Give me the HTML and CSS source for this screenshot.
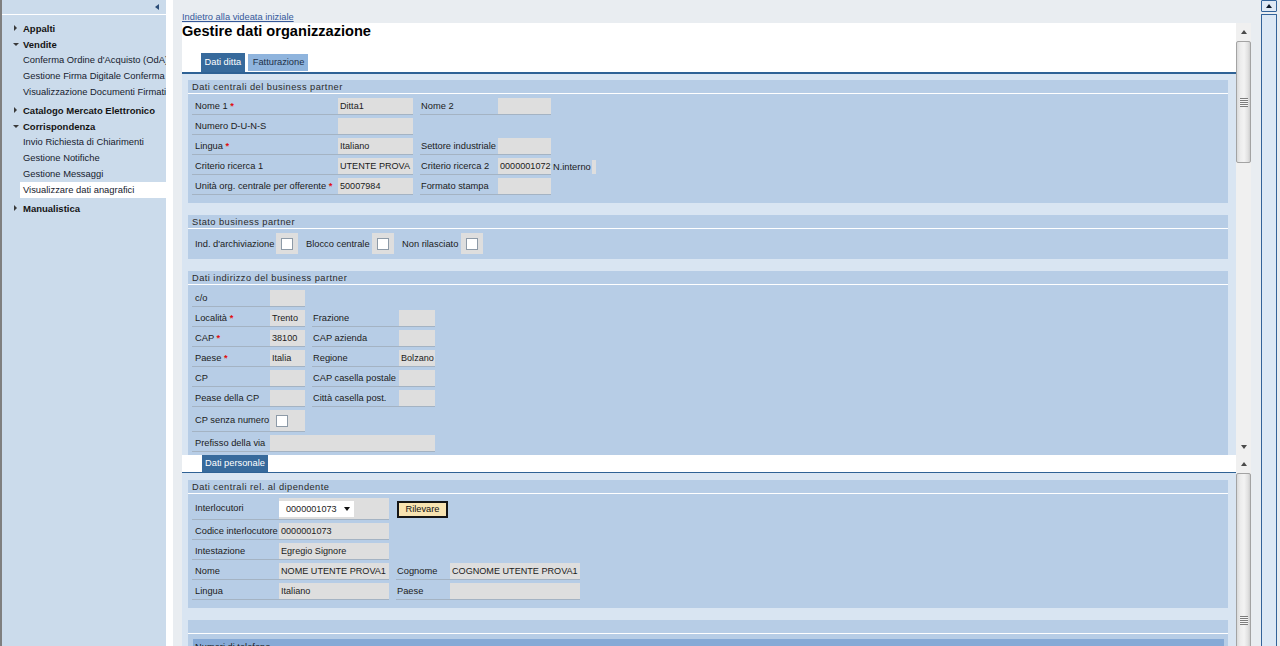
FILE: index.html
```html
<!DOCTYPE html>
<html lang="it">
<head>
<meta charset="utf-8">
<title>Gestire dati organizzazione</title>
<link rel="stylesheet" href="styles.css">
</head>
<body>
<div class="page">
  <aside class="nav">
    <div class="nav-top"><span class="collapse"></span></div>
    <ul class="nav-list">
      <li class="grp"><div class="grp-title"><span class="tri"><i class="r"></i></span>Appalti</div></li>
      <li class="grp open">
        <div class="grp-title"><span class="tri"><i class="d"></i></span>Vendite</div>
        <ul class="sub">
          <li>Conferma Ordine d'Acquisto (OdA)</li>
          <li>Gestione Firma Digitale Conferma</li>
          <li>Visualizzazione Documenti Firmati</li>
        </ul>
      </li>
      <li class="grp"><div class="grp-title"><span class="tri"><i class="r"></i></span>Catalogo Mercato Elettronico</div></li>
      <li class="grp open">
        <div class="grp-title"><span class="tri"><i class="d"></i></span>Corrispondenza</div>
        <ul class="sub">
          <li>Invio Richiesta di Chiarimenti</li>
          <li>Gestione Notifiche</li>
          <li>Gestione Messaggi</li>
          <li class="sel">Visualizzare dati anagrafici</li>
        </ul>
      </li>
      <li class="grp"><div class="grp-title"><span class="tri"><i class="r"></i></span>Manualistica</div></li>
    </ul>
  </aside>
  <div class="stripe"></div>
  <main class="main">
    <a class="back" href="#">Indietro alla videata iniziale</a>

    <div class="frame frame-top">
      <div class="fcontent">
        <div class="fhead">
          <h1 class="title">Gestire dati organizzazione</h1>
          <div class="tabs">
            <span class="tab active">Dati ditta</span>
            <span class="tab inactive">Fatturazione</span>
          </div>
        </div>
        <div class="area">
          <section class="sec">
            <div class="sec-h">Dati centrali del business partner</div>
            <div class="sec-b b1">
              <table class="form t1">
                <colgroup><col class="w146"><col class="w75"><col class="w7"><col class="w78"><col class="w53"><col class="w41"><col class="w4"></colgroup>
                <tr><td class="l">Nome 1 <b class="req">*</b></td><td class="f">Ditta1</td><td></td><td class="l l2">Nome 2</td><td class="f"></td><td></td><td></td></tr>
                <tr><td class="l">Numero D-U-N-S</td><td class="f"></td><td></td><td></td><td></td><td></td><td></td></tr>
                <tr><td class="l">Lingua <b class="req">*</b></td><td class="f">Italiano</td><td></td><td class="l l2">Settore industriale</td><td class="f"></td><td></td><td></td></tr>
                <tr><td class="l">Criterio ricerca 1</td><td class="f">UTENTE PROVA</td><td></td><td class="l l2">Criterio ricerca 2</td><td class="f">0000001072</td><td class="n">N.interno</td><td class="tiny"><div class="tinybox"></div></td></tr>
                <tr><td class="l">Unità org. centrale per offerente <b class="req">*</b></td><td class="f">50007984</td><td></td><td class="l l2">Formato stampa</td><td class="f"></td><td></td><td></td></tr>
              </table>
            </div>
          </section>

          <section class="sec">
            <div class="sec-h">Stato business partner</div>
            <div class="sec-b chkrow">
              <span class="cl cl1">Ind. d'archiviazione</span><span class="cbox"><i></i></span>
              <span class="cl cl2">Blocco centrale</span><span class="cbox"><i></i></span>
              <span class="cl cl3">Non rilasciato</span><span class="cbox"><i></i></span>
            </div>
          </section>

          <section class="sec">
            <div class="sec-h">Dati indirizzo del business partner</div>
            <div class="sec-b b3">
              <table class="form t3">
                <colgroup><col class="w78"><col class="w35"><col class="w7"><col class="w87"><col class="w36"></colgroup>
                <tr><td class="l">c/o</td><td class="f"></td><td></td><td></td><td></td></tr>
                <tr><td class="l">Località <b class="req">*</b></td><td class="f">Trento</td><td></td><td class="l l2">Frazione</td><td class="f"></td></tr>
                <tr><td class="l">CAP <b class="req">*</b></td><td class="f">38100</td><td></td><td class="l l2">CAP azienda</td><td class="f"></td></tr>
                <tr><td class="l">Paese <b class="req">*</b></td><td class="f">Italia</td><td></td><td class="l l2">Regione</td><td class="f">Bolzano</td></tr>
                <tr><td class="l">CP</td><td class="f"></td><td></td><td class="l l2">CAP casella postale</td><td class="f"></td></tr>
                <tr><td class="l">Pease della CP</td><td class="f"></td><td></td><td class="l l2">Città casella post.</td><td class="f"></td></tr>
                <tr class="tall"><td class="l">CP senza numero</td><td class="f"><div class="cbwrap"><i class="cb"></i></div></td><td></td><td></td><td></td></tr>
                <tr><td class="l">Prefisso della via</td><td class="f" colspan="4"></td></tr>
              </table>
            </div>
          </section>
        </div>
      </div>
      <div class="vscroll">
        <div class="sbtn"><i class="au"></i></div>
        <div class="thumb t-top"><span class="grip"></span></div>
        <div class="sfill"></div>
        <div class="sbtn"><i class="ad"></i></div>
      </div>
    </div>

    <div class="frame frame-bottom">
      <div class="fcontent">
        <div class="fhead">
          <div class="tabs tabs2">
            <span class="tab active">Dati personale</span>
          </div>
        </div>
        <div class="area area2">
          <section class="sec">
            <div class="sec-h">Dati centrali rel. al dipendente</div>
            <div class="sec-b b4">
              <table class="form t4">
                <colgroup><col class="w87"><col class="w110"><col class="w7"><col class="w54"><col class="w130"></colgroup>
                <tr class="tall"><td class="l">Interlocutori</td><td class="f fs"><div class="select"><span>0000001073</span><i class="ad blk"></i></div></td><td></td><td class="btncell" colspan="2"><span class="btn">Rilevare</span></td></tr>
                <tr><td class="l">Codice interlocutore</td><td class="f">0000001073</td><td></td><td></td><td></td></tr>
                <tr><td class="l">Intestazione</td><td class="f">Egregio Signore</td><td></td><td></td><td></td></tr>
                <tr><td class="l">Nome</td><td class="f">NOME UTENTE PROVA1</td><td></td><td class="l l2">Cognome</td><td class="f">COGNOME UTENTE PROVA1</td></tr>
                <tr><td class="l">Lingua</td><td class="f">Italiano</td><td></td><td class="l l2">Paese</td><td class="f"></td></tr>
              </table>
            </div>
          </section>
          <section class="sec">
            <div class="sec-h"></div>
            <div class="sec-b b5">
              <div class="subhead">Numeri di telefono</div>
            </div>
          </section>
        </div>
      </div>
      <div class="vscroll">
        <div class="sbtn"><i class="au"></i></div>
        <div class="thumb t-bot"><span class="grip"></span></div>
      </div>
    </div>
  </main>
  <div class="oscroll">
    <div class="obtn"><i class="au blk"></i></div>
    <div class="otrack"></div>
  </div>
</div>
</body>
</html>
```

FILE: styles.css
```css
html, body {
  margin: 0;
  padding: 0;
}
body {
  font-family: "Liberation Sans", Arial, sans-serif;
  font-size: 9.3px;
  color: #1b1b1b;
  background: #e9edf1;
  overflow: hidden;
}
.page {
  display: flex;
  height: 646px;
  overflow: hidden;
}

/* ---------- navigation ---------- */
.nav {
  flex: none;
  width: 164px;
  border-left: 2px solid #7f7f7f;
  background: #cbdbeb;
  overflow: hidden;
  font-size: 9.4px;
}
.nav-top {
  height: 14px;
  border-bottom: 1px solid #fff;
  display: flex;
  justify-content: flex-end;
  align-items: center;
  padding-right: 7px;
}
.collapse {
  width: 0;
  height: 0;
  border-top: 3px solid transparent;
  border-bottom: 3px solid transparent;
  border-right: 4px solid #2b4d78;
}
.nav-list, .sub {
  list-style: none;
  margin: 0;
  padding: 0;
}
.nav-list {
  padding-top: 5px;
}
.grp-title {
  display: flex;
  align-items: center;
  height: 16px;
  padding-left: 8px;
  font-weight: bold;
  font-size: 9.5px;
  color: #141414;
  white-space: nowrap;
}
.tri {
  width: 11px;
  height: 16px;
  margin-right: 2px;
  display: flex;
  align-items: center;
  justify-content: center;
}
.tri .r {
  width: 0;
  height: 0;
  border-top: 3px solid transparent;
  border-bottom: 3px solid transparent;
  border-left: 3px solid #3a3a3a;
}
.tri .d {
  width: 0;
  height: 0;
  border-left: 3px solid transparent;
  border-right: 3px solid transparent;
  border-top: 3px solid #3a3a3a;
}
.sub {
  margin-bottom: 2px;
}
.sub li {
  height: 16px;
  line-height: 16px;
  margin-left: 18px;
  padding-left: 3px;
  white-space: nowrap;
  overflow: hidden;
  color: #16212e;
}
.sub li.sel {
  background: #fff;
}

.stripe {
  flex: none;
  width: 7px;
  background: #fff;
}

/* ---------- main ---------- */
.main {
  flex: none;
  width: 1078px;
  padding-left: 9px;
  box-sizing: border-box;
  display: flex;
  flex-direction: column;
}
.back {
  display: block;
  padding-top: 11px;
  height: 12px;
  line-height: 12px;
  color: #35599b;
  text-decoration: underline;
  white-space: nowrap;
  align-self: flex-start;
}
.frame {
  display: flex;
  width: 1069px;
  flex: none;
  overflow: hidden;
}
.frame-top {
  height: 432px;
}
.frame-bottom {
  height: 191px;
}
.fcontent {
  flex: 1;
  overflow: hidden;
  background: #d9e5f2;
}
.fhead {
  background: #fff;
}
.title {
  margin: 0;
  font-size: 14.6px;
  line-height: 17px;
  font-weight: bold;
  color: #000;
}
.tabs {
  display: flex;
  align-items: flex-end;
  gap: 3px;
  margin-top: 13px;
  padding-left: 19px;
  border-bottom: 2px solid #2f6295;
}
.tab {
  padding: 0 3.5px;
  white-space: nowrap;
}
.tab.active {
  height: 19px;
  line-height: 19px;
  background: #376a9c;
  color: #fff;
}
.tab.inactive {
  height: 17px;
  line-height: 17px;
  margin-bottom: 1px;
  background: #8fb4dd;
  color: #1d3049;
  padding: 0 4px 0 5px;
}
.tabs2 {
  margin-top: 0;
  padding-left: 20px;
  border-bottom-width: 1px;
}
.tabs2 .tab.active {
  height: 17px;
  line-height: 17px;
  padding: 0 3px;
}

.area {
  padding: 6px 8px 0 6px;
}
.area2 {
  padding-top: 7px;
}
.sec {
  background: #b7cde6;
  margin-bottom: 12px;
}
.sec-h {
  height: 13px;
  line-height: 14px;
  padding-left: 4px;
  border-bottom: 1px solid #fff;
  letter-spacing: 0.45px;
  color: #2a2a2a;
  white-space: nowrap;
}
.sec-b {
  padding: 0 0 6px 4px;
}
.b1 {
  padding-top: 1px;
  padding-bottom: 5px;
}
.b3 {
  padding-top: 2px;
  padding-bottom: 40px;
}
.b4 {
  padding-top: 1px;
  padding-bottom: 5px;
}
.b5 {
  padding: 5px 4px 20px 5px;
}

/* ---------- form tables ---------- */
.form {
  border-collapse: separate;
  border-spacing: 0 3px;
  table-layout: fixed;
}
.t1 { width: 404px; }
.t3 { width: 243px; }
.t4 { width: 388px; }
.w146 { width: 146px; }
.w75 { width: 75px; }
.w7 { width: 7px; }
.w78 { width: 78px; }
.w53 { width: 53px; }
.w41 { width: 41px; }
.w4 { width: 4px; }
.w35 { width: 35px; }
.w87 { width: 87px; }
.w36 { width: 36px; }
.w110 { width: 110px; }
.w54 { width: 54px; }
.w130 { width: 130px; }

.form td {
  padding: 0 0 0 3px;
  line-height: 16px;
  white-space: nowrap;
  overflow: visible;
  vertical-align: middle;
}
.form td.l {
  border-bottom: 1px solid #a4b3c3;
}
.form td.l2 {
  padding-left: 1px;
}
.form td.f {
  background: #dedede;
  border-bottom: 1px solid #a4b3c3;
  overflow: hidden;
  padding-left: 2px;
  font-size: 9.1px;
}
.form td.fs {
  padding-left: 0;
}
.form td.n {
  padding-left: 2px;
}
.form td.tiny {
  padding: 0;
}
.tinybox {
  width: 4px;
  height: 14px;
  background: #dedede;
}
.req {
  color: #e01010;
  font-weight: bold;
}
.form tr.tall td {
  line-height: 21px;
}
.cbwrap {
  height: 21px;
  display: flex;
  align-items: center;
  padding-left: 4px;
}
.cb {
  display: block;
  width: 10px;
  height: 10px;
  background: #fff;
  border: 1px solid #8d9aa7;
}

/* checkbox row */
.chkrow {
  display: flex;
  align-items: center;
  padding-top: 4px;
  padding-bottom: 5px;
}
.cl {
  white-space: nowrap;
  box-sizing: border-box;
}
.cl1 { width: 84px; padding-left: 3px; }
.cl2 { width: 74px; padding-left: 8px; }
.cl3 { width: 67px; padding-left: 8px; }
.cbox {
  width: 22px;
  height: 21px;
  background: #dedede;
  display: flex;
  align-items: center;
  justify-content: center;
}
.cbox i {
  display: block;
  width: 10px;
  height: 10px;
  background: #fff;
  border: 1px solid #8d9aa7;
}

/* select + button */
.select {
  display: flex;
  align-items: center;
  justify-content: space-between;
  width: 75px;
  height: 16px;
  padding: 0 4px 0 7px;
  box-sizing: border-box;
  background: #fff;
  line-height: 16px;
}
.form td.btncell {
  padding-left: 1px;
  overflow: visible;
}
.btn {
  display: inline-block;
  width: 51px;
  height: 17px;
  box-sizing: border-box;
  border: 2px solid #151515;
  background: #f8e3b1;
  text-align: center;
  line-height: 13px;
  vertical-align: middle;
  color: #111;
}

.subhead {
  height: 14px;
  line-height: 16px;
  padding-left: 2px;
  background: #86aad6;
  color: #1b1b1b;
}

/* ---------- arrows ---------- */
.au, .ad {
  display: block;
  width: 0;
  height: 0;
  border-left: 3.5px solid transparent;
  border-right: 3.5px solid transparent;
}
.au { border-bottom: 4px solid #4a4a4a; }
.ad { border-top: 4px solid #4a4a4a; }
.au.blk { border-bottom-color: #0e1a2a; }
.ad.blk { border-top-color: #111; }

/* ---------- frame scrollbars ---------- */
.vscroll {
  flex: none;
  width: 15px;
  background: #f0f0f0;
  display: flex;
  flex-direction: column;
  overflow: hidden;
}
.sbtn {
  flex: none;
  height: 17px;
  display: flex;
  align-items: center;
  justify-content: center;
  background: #f0f0f0;
}
.thumb {
  flex: none;
  box-sizing: border-box;
  margin: 1px 0 0 0;
  border: 1px solid #a3a3a3;
  border-radius: 2px;
  background: linear-gradient(to right, #dadada 0%, #ececec 25%, #f3f3f3 55%, #e0e0e0 85%, #cdcdcd 100%);
  display: flex;
  align-items: center;
  justify-content: center;
}
.t-top { height: 122px; }
.t-bot {
  height: 294px;
  margin-top: 1px;
}
.grip {
  display: block;
  width: 8px;
  height: 9px;
  background: repeating-linear-gradient(to bottom, #7d7d7d 0, #7d7d7d 1px, #f6f6f6 1px, #f6f6f6 2px);
}
.sfill {
  flex: 1;
}

/* ---------- outer scrollbar ---------- */
.oscroll {
  flex: none;
  width: 16px;
  margin-left: 10px;
  display: flex;
  flex-direction: column;
}
.obtn {
  height: 10px;
  border: 1px solid #33639a;
  border-radius: 1px;
  background: #dfe9f5;
  display: flex;
  align-items: center;
  justify-content: center;
}
.otrack {
  flex: 1;
  margin-top: 2px;
  border: 1px solid #33639a;
  border-bottom: none;
  border-radius: 1px 1px 0 0;
  background: #dce8f5;
}
```
